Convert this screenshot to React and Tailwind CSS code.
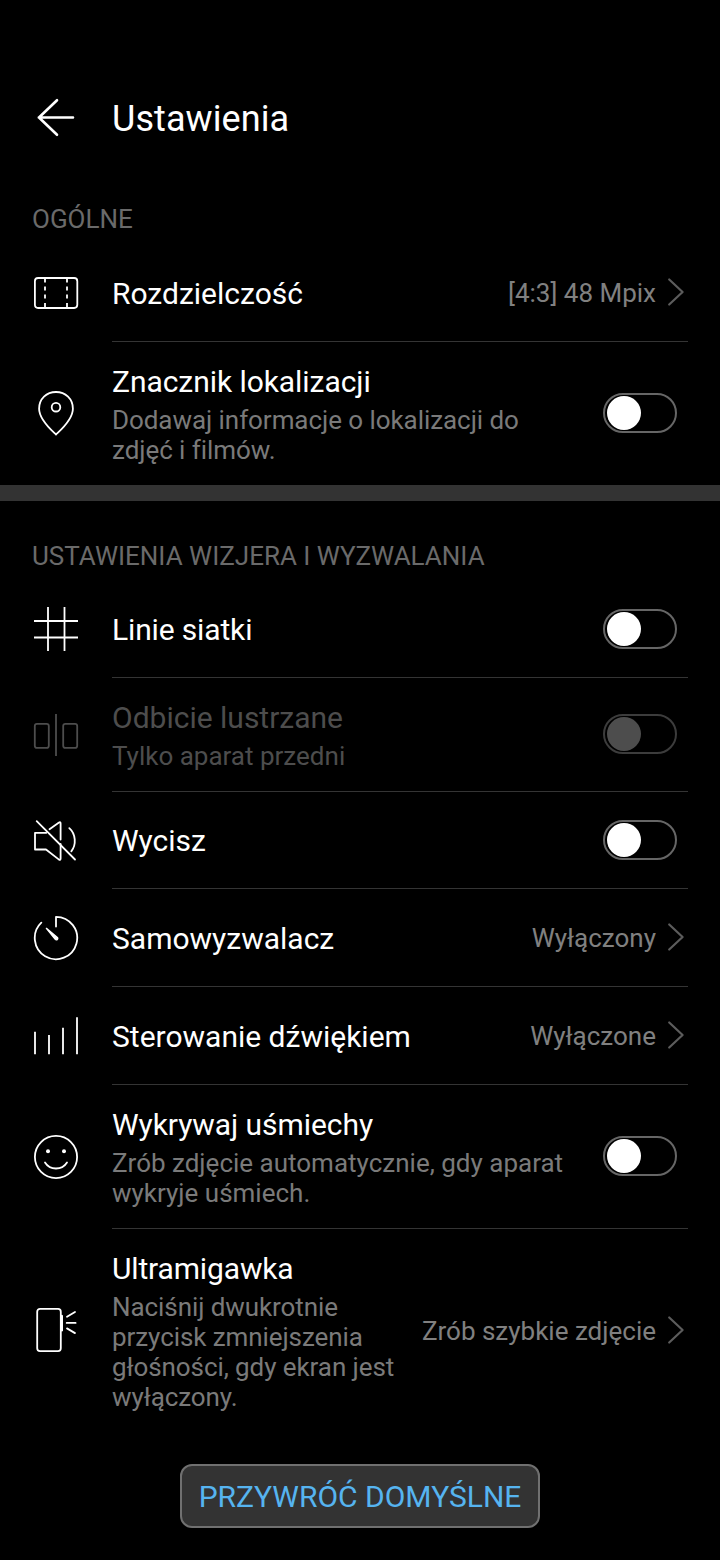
import React from "react";

function Icon({ children, className = "" }) {
  return (
    <svg
      viewBox="0 0 48 48"
      className={`h-12 w-12 shrink-0 ${className}`}
      fill="none"
      stroke="currentColor"
      strokeWidth="1.8"
      strokeLinecap="round"
      strokeLinejoin="round"
    >
      {children}
    </svg>
  );
}

const icons = {
  resolution: (
    <Icon>
      <rect x="2.9" y="9" width="42.4" height="30" rx="3.2" />
      <path d="M13 9v4.5M13 17.5v4M13 25.5v4M13 34v5M35 9v4.5M35 17.5v4M35 25.5v4M35 34v5" strokeLinecap="butt" />
    </Icon>
  ),
  pin: (
    <Icon>
      <path d="M24 44.5C21 41.500 7.100 30 7.100 18.700C7.100 9 14.500 2 24 2S40.900 9 40.900 18.700C40.900 30 27 41.500 24 44.500Z" />
      <circle cx="24" cy="17.200" r="4.300" />
    </Icon>
  ),
  grid: (
    <Icon>
      <path d="M16 2v44M32.500 2v44M2 16h44M2 32.500h44" strokeLinecap="butt" />
    </Icon>
  ),
  mirror: (
    <Icon>
      <rect x="2.800" y="12.900" width="14" height="24" rx="2.200" />
      <rect x="31.200" y="12.900" width="14" height="24" rx="2.200" />
      <path d="M24 3v42" strokeLinecap="butt" />
    </Icon>
  ),
  mute: (
    <Icon>
      <path d="M4.700 4.200L43 42.500" />
      <path d="M14.300 15.800H3v16.700H14L27 42.600Q28.600 43.400 28.600 41.600V27M28.600 22.500V6.500Q28.600 4.700 27 5.500L17.500 12.300" />
      <path d="M37.300 11.200C43.800 17 44.600 27.500 39.300 34.400" />
    </Icon>
  ),
  timer: (
    <Icon>
      <path d="M24 12.500V2.800A21.200 21.200 0 1 1 9.300 8.700" />
      <path d="M14.400 14.400L25.400 23.500A1.400 1.400 0 0 1 23.300 25.400Z" fill="currentColor" strokeWidth="1.400" />
    </Icon>
  ),
  bars: (
    <Icon>
      <path d="M3 19.700v22.600M17 23v19.300M31 15.700v26.600M45 5.300v37" strokeLinecap="butt" />
    </Icon>
  ),
  smile: (
    <Icon>
      <circle cx="24" cy="24" r="21.100" />
      <circle cx="16" cy="18.200" r="2" fill="currentColor" stroke="none" />
      <circle cx="32" cy="18.200" r="2" fill="currentColor" stroke="none" />
      <path d="M13 29.500C18 37.500 30 37.500 35 29.500" />
    </Icon>
  ),
  shutter: (
    <Icon>
      <rect x="5.200" y="1.900" width="23.600" height="42.200" rx="2.800" />
      <path d="M29.800 9v14.300" strokeWidth="2.400" />
      <path d="M35 9.700L43 4.900M34.700 15.900H43.600M35 21.400L43 26.100" />
    </Icon>
  ),
};

function Toggle({ disabled, raised }) {
  return (
    <button
      role="switch"
      aria-checked="false"
      disabled={disabled}
      className={`mr-[11px] flex h-10 w-[74px] shrink-0 items-center rounded-full border-2 pl-[2px] ${
        disabled ? "border-[#3c3c3c]" : "border-[#666666]"
      } ${raised ? "mb-0.5" : ""}`}
    >
      <span className={`h-[34px] w-[34px] rounded-full ${disabled ? "bg-[#4d4d4d]" : "bg-white"}`} />
    </button>
  );
}

function Value({ children }) {
  return (
    <div className="flex shrink-0 items-center">
      <span className="text-[26px] leading-[30px] text-[#808080]">{children}</span>
      <svg
        viewBox="0 0 20 30"
        className="mr-0.5 mb-0.5 ml-2.5 h-[30px] w-5"
        fill="none"
        stroke="#5c5c5c"
        strokeWidth="2.200"
        strokeLinecap="round"
        strokeLinejoin="round"
      >
        <path d="M3.200 2.500L16.600 15L3.200 27.500" />
      </svg>
    </div>
  );
}

function Row({ icon, title, sub, value, disabled, last, height, textClass = "", titleClass = "", subClass = "" }) {
  return (
    <div className={`flex items-center gap-8 px-8 ${height} ${disabled ? "text-[#4d4d4d]" : "text-white"}`}>
      {icons[icon]}
      <div
        className={`flex h-full min-w-0 flex-1 items-center justify-between ${
          last ? "" : "border-b border-[#343434]"
        }`}
      >
        <div className={`min-w-0 flex-1 pt-[2px] pr-5 ${textClass}`}>
          <div className={`text-[30px] leading-9 whitespace-nowrap ${titleClass}`}>{title}</div>
          {sub && (
            <div className={`mt-[5px] text-[26px] leading-[30px] ${disabled ? "" : "text-[#7a7a7a]"} ${subClass}`}>
              {sub.map((line) => (
                <div key={line} className="whitespace-nowrap">
                  {line}
                </div>
              ))}
            </div>
          )}
        </div>
        {value ? <Value>{value}</Value> : <Toggle disabled={disabled} raised={Boolean(sub)} />}
      </div>
    </div>
  );
}

function SectionTitle({ children, className }) {
  return <h2 className={`px-8 text-[26px] leading-[30px] text-[#6a6a6a] ${className}`}>{children}</h2>;
}

export default function App() {
  return (
    <main className="flex h-[1560px] w-[720px] flex-col overflow-hidden bg-black font-['Roboto',sans-serif]">
      <header className="flex h-[172px] shrink-0 items-center gap-8 px-8 pt-[65px]">
        <Icon className="text-white">
          <path d="M41 22.500H6.800M25 5.200L7 22.500L25 39.800" strokeWidth="2.600" />
        </Icon>
        <h1 className="pt-px text-[36px] leading-[42px] tracking-[0.08px] text-white">Ustawienia</h1>
      </header>

      <section className="shrink-0">
        <SectionTitle className="pt-8 pb-[10px]">OGÓLNE</SectionTitle>
        <Row icon="resolution" title="Rozdzielczość" value="[4:3] 48 Mpix" height="h-[98px]" />
        <Row
          icon="pin"
          title="Znacznik lokalizacji"
          sub={["Dodawaj informacje o lokalizacji do", "zdjęć i filmów."]}
          height="h-[143px]"
          titleClass="tracking-[-0.06px]"
          subClass="tracking-[-0.06px]"
          last
        />
      </section>

      <div className="h-4 shrink-0 bg-[#333333]" />

      <section className="shrink-0">
        <SectionTitle className="pt-10 pb-[9px]">USTAWIENIA WIZJERA I WYZWALANIA</SectionTitle>
        <Row icon="grid" title="Linie siatki" height="h-[98px]" titleClass="tracking-[-0.15px]" />
        <Row icon="mirror" title="Odbicie lustrzane" sub={["Tylko aparat przedni"]} height="h-[114px]" disabled />
        <Row icon="mute" title="Wycisz" height="h-[97px]" />
        <Row icon="timer" title="Samowyzwalacz" value="Wyłączony" height="h-[98px]" />
        <Row icon="bars" title="Sterowanie dźwiękiem" value="Wyłączone" height="h-[98px]" />
        <Row
          icon="smile"
          title="Wykrywaj uśmiechy"
          sub={["Zrób zdjęcie automatycznie, gdy aparat", "wykryje uśmiech."]}
          height="h-[144px]"
          titleClass="tracking-[-0.06px]"
        />
        <Row
          icon="shutter"
          title="Ultramigawka"
          sub={["Naciśnij dwukrotnie", "przycisk zmniejszenia", "głośności, gdy ekran jest", "wyłączony."]}
          value="Zrób szybkie zdjęcie"
          height="h-[204px]"
          textClass="pb-[2px]"
          titleClass="tracking-[-0.15px]"
          subClass="tracking-[-0.08px]"
          last
        />
      </section>

      <footer className="flex shrink-0 justify-center pt-[31px]">
        <button className="h-16 w-[360px] rounded-xl border-2 border-[#707070] bg-[#333333] pt-0.5 text-[30px] leading-9 whitespace-nowrap text-[#56b4f0]">
          PRZYWRÓĆ DOMYŚLNE
        </button>
      </footer>
    </main>
  );
}
